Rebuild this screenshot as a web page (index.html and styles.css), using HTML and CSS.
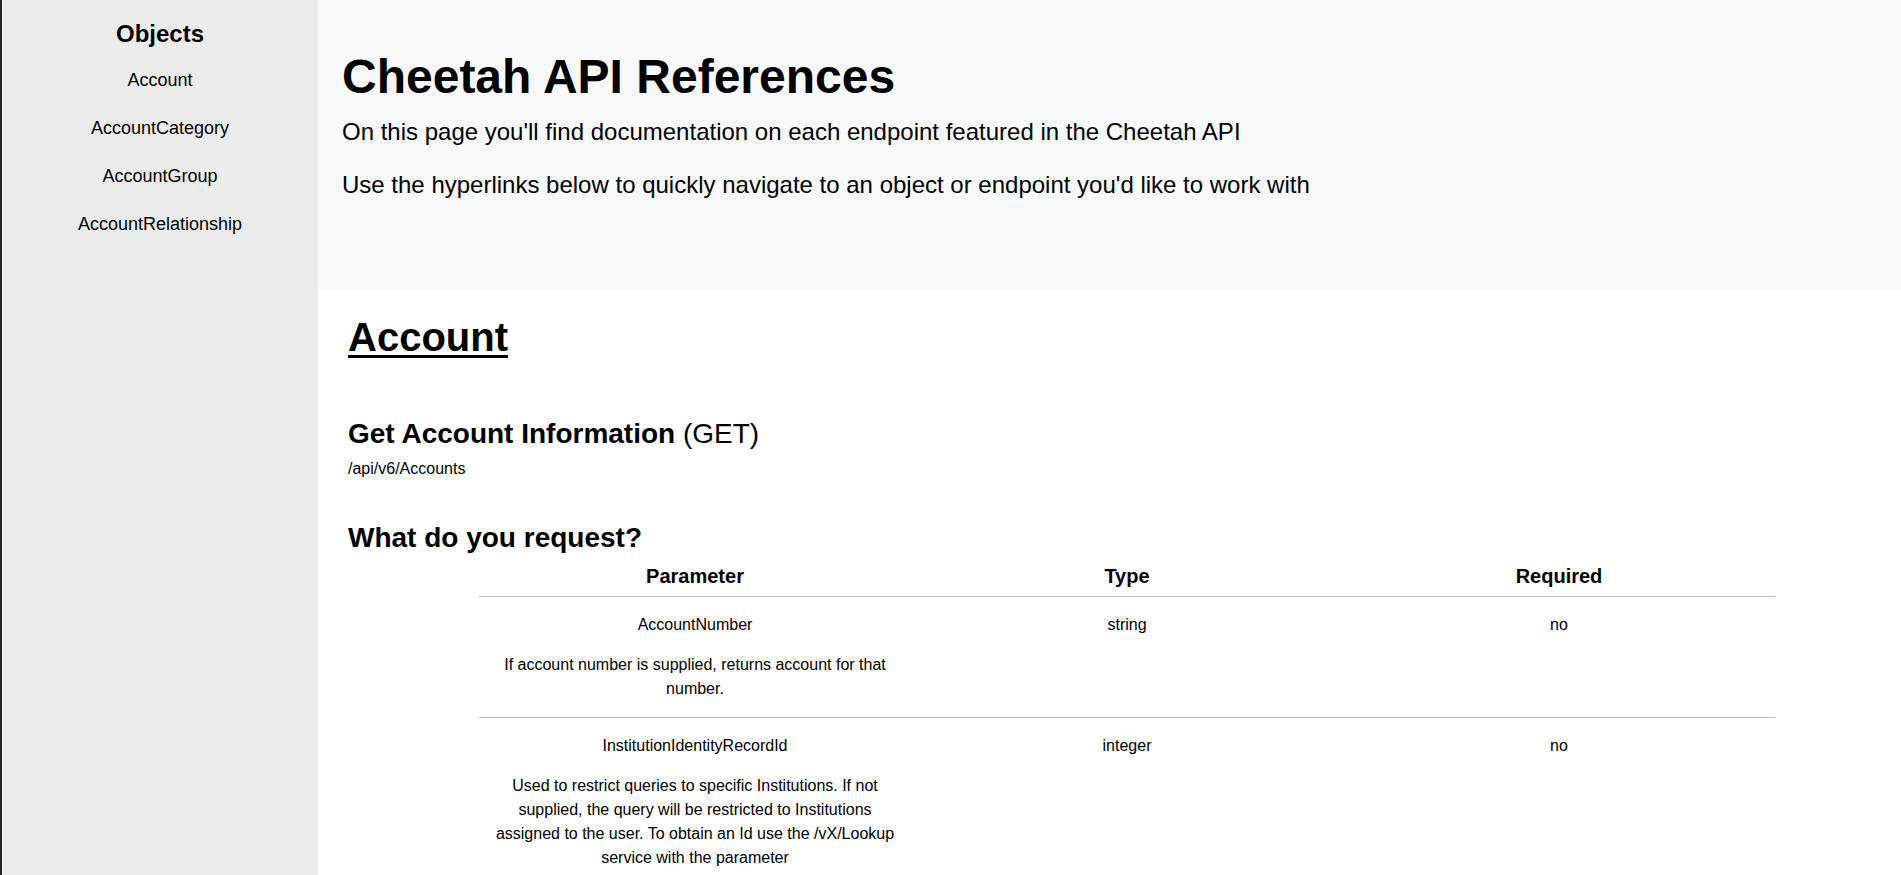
FILE: index.html
```html
<!DOCTYPE html>
<html lang="en">
<head>
<meta charset="utf-8">
<title>Cheetah API References</title>
<link rel="stylesheet" href="styles.css">
</head>
<body>
<div class="layout">
  <nav class="sidebar">
    <h2 class="sidebar-title">Objects</h2>
    <ul class="nav-list">
      <li><a href="#account">Account</a></li>
      <li><a href="#accountcategory">AccountCategory</a></li>
      <li><a href="#accountgroup">AccountGroup</a></li>
      <li><a href="#accountrelationship">AccountRelationship</a></li>
    </ul>
  </nav>
  <main class="main">
    <header class="intro">
      <h1 class="intro-title">Cheetah API References</h1>
      <p class="intro-text">On this page you'll find documentation on each endpoint featured in the Cheetah API</p>
      <p class="intro-text">Use the hyperlinks below to quickly navigate to an object or endpoint you'd like to work with</p>
    </header>
    <section class="object" id="account">
      <h2 class="object-title">Account</h2>
      <h3 class="endpoint-title">Get Account Information <span class="method">(GET)</span></h3>
      <p class="endpoint-path">/api/v6/Accounts</p>
      <h3 class="request-title">What do you request?</h3>
      <table class="params">
        <thead>
          <tr>
            <th>Parameter</th>
            <th>Type</th>
            <th>Required</th>
          </tr>
        </thead>
        <tbody>
          <tr>
            <td>
              <p class="param-name">AccountNumber</p>
              <p class="param-desc">If account number is supplied, returns account for that number.</p>
            </td>
            <td><p class="param-name">string</p></td>
            <td><p class="param-name">no</p></td>
          </tr>
          <tr>
            <td>
              <p class="param-name">InstitutionIdentityRecordId</p>
              <p class="param-desc">Used to restrict queries to specific Institutions. If not supplied, the query will be restricted to Institutions assigned to the user. To obtain an Id use the /vX/Lookup service with the parameter <span class="keep">'InstitutionIdentityRecordId' value.</span></p>
            </td>
            <td><p class="param-name">integer</p></td>
            <td><p class="param-name">no</p></td>
          </tr>
        </tbody>
      </table>
    </section>
  </main>
</div>
</body>
</html>
```

FILE: styles.css
```css
* {
  box-sizing: border-box;
}

html, body {
  margin: 0;
  padding: 0;
}

body {
  font-family: "Liberation Sans", Arial, sans-serif;
  color: #000;
  background: #fff;
}

.layout {
  display: flex;
  align-items: stretch;
  min-height: 100vh;
}

.sidebar {
  flex: 0 0 318px;
  width: 318px;
  min-height: 100vh;
  background: #ececec;
  border-left: 2px solid #242424;
  text-align: center;
  padding-top: 20px;
}

.sidebar-title {
  margin: 0;
  font-size: 24px;
  font-weight: bold;
  line-height: 28px;
}

.nav-list {
  list-style: none;
  margin: 22px 0 0;
  padding: 0;
  display: flex;
  flex-direction: column;
  gap: 27px;
}

.nav-list a {
  color: #000;
  text-decoration: none;
  font-size: 18px;
  line-height: 21px;
}

.main {
  flex: 1 1 auto;
  min-width: 0;
}

.intro {
  background: #f8f9fa;
  height: 289px;
  padding: 49px 24px 0;
}

.intro-title {
  margin: 0 0 14px;
  font-size: 48px;
  line-height: 55px;
  font-weight: bold;
}

.intro-text {
  margin: 0 0 25px;
  font-size: 24px;
  line-height: 28px;
}

.object {
  padding: 25px 30px 40px;
}

.object-title {
  margin: 0;
  font-size: 40px;
  line-height: 46px;
  font-weight: bold;
  text-decoration: underline;
  text-decoration-thickness: 3px;
  text-underline-offset: 4px;
}

.endpoint-title {
  margin: 58px 0 0;
  font-size: 28px;
  line-height: 32px;
  font-weight: bold;
}

.method {
  font-weight: normal;
}

.endpoint-path {
  margin: 10px 0 0;
  font-size: 16px;
  line-height: 18px;
}

.request-title {
  margin: 44px 0 0;
  font-size: 28px;
  line-height: 32px;
  font-weight: bold;
}

.params {
  width: 1296px;
  margin-left: 131px;
  border-collapse: collapse;
  table-layout: fixed;
}

.params th {
  font-size: 20px;
  line-height: 23px;
  font-weight: bold;
  padding: 11px 16px 8px;
  border-bottom: 1px solid #bdbdbd;
  text-align: center;
}

.params td {
  padding: 16px;
  vertical-align: top;
  text-align: center;
  font-size: 16px;
  line-height: 24px;
  border-bottom: 1px solid #bdbdbd;
}

.param-name {
  margin: 0;
}

.param-desc {
  margin: 16px 0 0;
}

.keep {
  white-space: nowrap;
}
```
